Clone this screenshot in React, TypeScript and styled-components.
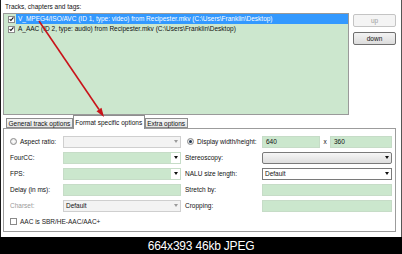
import React from "react";
import styled, { createGlobalStyle } from "styled-components";

const GlobalStyle = createGlobalStyle`
  html, body {
    margin: 0;
    padding: 0;
    background: #000;
  }
  body {
    width: 402px;
    height: 254px;
    overflow: hidden;
    font-family: "Liberation Sans", Arial, sans-serif;
  }
`;

const Screen = styled.div`
  width: 402px;
  height: 254px;
  display: flex;
  flex-direction: column;
`;

const Window = styled.div`
  position: relative;
  height: 237px;
  box-sizing: border-box;
  background: #fff;
  border-left: 1px solid #1a1a1a;
  border-right: 1px solid #555;
  padding: 2px 5px 0 2px;
  display: flex;
  flex-direction: column;
  font-size: 6.5px;
  color: #111;
`;

const Heading = styled.div`
  height: 9px;
  line-height: 9px;
  margin-left: 2px;
`;

const TopRow = styled.div`
  display: flex;
  gap: 4px;
  margin-top: 2px;
`;

const TrackList = styled.div`
  width: 346px;
  height: 102px;
  box-sizing: border-box;
  border: 1px solid #9a9a9a;
  background: #cce7ce;
`;

const TrackRow = styled.div`
  display: flex;
  align-items: center;
  height: 10px;
  padding-left: 4px;
`;

const CheckBox = styled.span`
  width: 7px;
  height: 7px;
  box-sizing: border-box;
  background: #fff;
  border: 1px solid #8a8a8a;
  display: flex;
  align-items: center;
  justify-content: center;
  flex-shrink: 0;
`;

const TrackText = styled.span<{ selected?: boolean }>`
  flex: 1;
  height: 10px;
  line-height: 10px;
  margin-left: 1px;
  padding-left: 2px;
  white-space: nowrap;
  overflow: hidden;
  background: ${(p) => (p.selected ? "#3399ff" : "transparent")};
  color: ${(p) => (p.selected ? "#fff" : "#111")};
`;

const SideButtons = styled.div`
  width: 43px;
  display: flex;
  flex-direction: column;
  gap: 5px;
  padding-top: 1px;
`;

const SideButton = styled.div<{ disabled?: boolean }>`
  height: 13px;
  box-sizing: border-box;
  display: flex;
  align-items: center;
  justify-content: center;
  border: 1px solid ${(p) => (p.disabled ? "#c4c4c4" : "#6f6f6f")};
  border-radius: 2px;
  background: ${(p) =>
    p.disabled ? "#f4f4f4" : "linear-gradient(#f3f3f3, #dcdcdc)"};
  color: ${(p) => (p.disabled ? "#a0a0a0" : "#111")};
`;

const TabStrip = styled.div`
  display: flex;
  align-items: flex-end;
  height: 13px;
  margin-left: 3px;
  position: relative;
  z-index: 1;
`;

const Tab = styled.div<{ active?: boolean }>`
  height: ${(p) => (p.active ? "14px" : "10px")};
  margin-bottom: ${(p) => (p.active ? "-1px" : "0")};
  box-sizing: border-box;
  padding: 0 1.5px;
  display: flex;
  align-items: center;
  border: 1px solid #8e8e8e;
  border-bottom: ${(p) => (p.active ? "none" : "1px solid #8e8e8e")};
  background: ${(p) => (p.active ? "#fff" : "linear-gradient(#f6f6f6, #e4e4e4)")};
  white-space: nowrap;
`;

const Panel = styled.div`
  height: 104px;
  box-sizing: border-box;
  border: 1px solid #9c9c9c;
  padding: 6px 3px 0 6px;
`;

const Form = styled.div`
  display: grid;
  grid-template-columns: 53px 118px 81px 130px;
  grid-auto-rows: 13px;
  row-gap: 3px;
  align-items: center;
`;

const Label = styled.div<{ muted?: boolean; right?: boolean }>`
  padding-left: ${(p) => (p.right ? "4px" : "0")};
  color: ${(p) => (p.muted ? "#9a9a9a" : "#111")};
  white-space: nowrap;
  display: flex;
  align-items: center;
`;

const Radio = styled.span<{ checked?: boolean; right?: boolean }>`
  width: 7px;
  height: 7px;
  box-sizing: border-box;
  border-radius: 50%;
  border: 1px solid #8a8a8a;
  background: radial-gradient(circle, #fff 0, #dedede 100%);
  margin-left: ${(p) => (p.right ? "2px" : "0")};
  margin-right: 3px;
  display: flex;
  align-items: center;
  justify-content: center;
  &::after {
    content: "";
    width: 3px;
    height: 3px;
    border-radius: 50%;
    background: ${(p) => (p.checked ? "#1f3550" : "transparent")};
  }
`;

const Combo = styled.div<{ tone: "disabled" | "green" | "plain" | "raised" }>`
  height: 12px;
  box-sizing: border-box;
  display: flex;
  align-items: center;
  border: 1px solid
    ${(p) =>
      p.tone === "disabled" ? "#cfcfcf" : p.tone === "green" ? "#c6dcc7" : "#7a7a7a"};
  border-radius: ${(p) => (p.tone === "raised" ? "2px" : "0")};
  background: ${(p) =>
    p.tone === "disabled"
      ? "#f3f3f3"
      : p.tone === "raised"
      ? "linear-gradient(#f6f6f6, #dedede)"
      : "#fff"};
`;

const ComboText = styled.div<{ green?: boolean }>`
  flex: 1;
  height: 100%;
  padding-left: 2px;
  display: flex;
  align-items: center;
  background: ${(p) => (p.green ? "#cbe7cd" : "transparent")};
`;

const ArrowBox = styled.div<{ muted?: boolean }>`
  width: 9px;
  height: 100%;
  display: flex;
  align-items: center;
  justify-content: center;
  &::after {
    content: "";
    border-left: 2.5px solid transparent;
    border-right: 2.5px solid transparent;
    border-top: 3px solid ${(p) => (p.muted ? "#9a9a9a" : "#111")};
  }
`;

const Field = styled.div<{ w?: number }>`
  height: 12px;
  width: ${(p) => (p.w ? `${p.w}px` : "auto")};
  box-sizing: border-box;
  border: 1px solid #c6dcc7;
  background: #cbe7cd;
  padding-left: 3px;
  display: flex;
  align-items: center;
`;

const SizePair = styled.div`
  display: flex;
  align-items: center;
`;

const Times = styled.span`
  width: 10px;
  text-align: center;
`;

const CheckLine = styled.div`
  grid-column: 1 / 3;
  display: flex;
  align-items: center;
  gap: 3px;
  color: #222;
`;

const Overlay = styled.svg`
  position: absolute;
  left: 0;
  top: 0;
  width: 402px;
  height: 237px;
  pointer-events: none;
  z-index: 5;
`;

const Caption = styled.div`
  height: 17px;
  background: #000;
  color: #fff;
  font-size: 12px;
  letter-spacing: -0.2px;
  display: flex;
  align-items: center;
  justify-content: center;
`;

const Tick = () => (
  <svg width="6" height="6" viewBox="0 0 6 6">
    <path d="M0.8 3.2 L2.3 4.8 L5.3 1" stroke="#111" strokeWidth="1.3" fill="none" />
  </svg>
);

const tracks = [
  "V_MPEG4/ISO/AVC (ID 1, type: video) from Recipester.mkv (C:\\Users\\Franklin\\Desktop)",
  "A_AAC (ID 2, type: audio) from Recipester.mkv (C:\\Users\\Franklin\\Desktop)",
];

export default function App() {
  return (
    <Screen>
      <GlobalStyle />
      <Window>
        <Heading>Tracks, chapters and tags:</Heading>
        <TopRow>
          <TrackList>
            {tracks.map((t, i) => (
              <TrackRow key={i}>
                <CheckBox>
                  <Tick />
                </CheckBox>
                <TrackText selected={i === 0}>{t}</TrackText>
              </TrackRow>
            ))}
          </TrackList>
          <SideButtons>
            <SideButton disabled>up</SideButton>
            <SideButton>down</SideButton>
          </SideButtons>
        </TopRow>
        <TabStrip>
          <Tab>General track options</Tab>
          <Tab active>Format specific options</Tab>
          <Tab>Extra options</Tab>
        </TabStrip>
        <Panel>
          <Form>
            <Label>
              <Radio />
              Aspect ratio:
            </Label>
            <Combo tone="disabled">
              <ComboText />
              <ArrowBox muted />
            </Combo>
            <Label right>
              <Radio checked right />
              Display width/height:
            </Label>
            <SizePair>
              <Field w={58}>640</Field>
              <Times>x</Times>
              <Field w={62}>360</Field>
            </SizePair>

            <Label>FourCC:</Label>
            <Combo tone="green">
              <ComboText green />
              <ArrowBox />
            </Combo>
            <Label right>Stereoscopy:</Label>
            <Combo tone="raised">
              <ComboText />
              <ArrowBox />
            </Combo>

            <Label>FPS:</Label>
            <Combo tone="green">
              <ComboText green />
              <ArrowBox />
            </Combo>
            <Label right>NALU size length:</Label>
            <Combo tone="plain">
              <ComboText>Default</ComboText>
              <ArrowBox />
            </Combo>

            <Label>Delay (in ms):</Label>
            <Field />
            <Label right>Stretch by:</Label>
            <Field />

            <Label muted>Charset:</Label>
            <Combo tone="disabled">
              <ComboText>Default</ComboText>
              <ArrowBox muted />
            </Combo>
            <Label right>Cropping:</Label>
            <Field />

            <CheckLine>
              <CheckBox />
              AAC is SBR/HE-AAC/AAC+
            </CheckLine>
          </Form>
        </Panel>
        <Overlay viewBox="0 0 402 237">
          <line x1="38" y1="21" x2="98" y2="109.5" stroke="#c8141a" strokeWidth="1.6" />
          <polygon points="103,117 95.5,111.2 100.5,107.8" fill="#c8141a" />
        </Overlay>
      </Window>
      <Caption>664x393 46kb JPEG</Caption>
    </Screen>
  );
}
